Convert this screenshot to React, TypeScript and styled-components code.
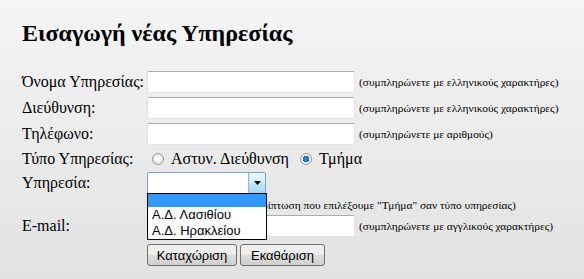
import React, { useState } from "react";
import styled, { createGlobalStyle } from "styled-components";

const GlobalStyle = createGlobalStyle`
  html, body {
    margin: 0;
    padding: 0;
  }
  body {
    font-family: "Liberation Serif", "Times New Roman", serif;
    color: #000;
    background: linear-gradient(180deg, #f5f5f5 0%, #e2e2e2 100%);
    min-height: 279px;
  }
`;

const Page = styled.div`
  width: 584px;
  height: 279px;
  box-sizing: border-box;
  padding: 19px 0 0 22px;
  background: linear-gradient(180deg, #f5f5f5 0%, #e2e2e2 100%);
  overflow: hidden;
`;

const Title = styled.h1`
  margin: 0 0 22px 0;
  font-size: 24px;
  line-height: 28px;
  font-weight: bold;
`;

const Form = styled.div`
  display: grid;
  grid-template-columns: 125px 212px 1fr;
  grid-template-rows: 26px 26px 26px 24px 24px 18px 26px 32px;
  align-items: center;
`;

const Label = styled.label`
  font-size: 16px;
  line-height: 18px;
  grid-column: 1;
`;

const TextInput = styled.input`
  box-sizing: border-box;
  width: 208px;
  height: 22px;
  margin: 0;
  border: 1px solid #e2e3ea;
  border-top-color: #abadb3;
  border-left-color: #dbdfe6;
  border-radius: 2px;
  background: #fff;
  font: 13px "Liberation Sans", Arial, sans-serif;
`;

const Hint = styled.span<{ $indent?: number }>`
  font-size: 11.4px;
  line-height: 14px;
  white-space: nowrap;
  padding-left: ${(p) => p.$indent ?? 0}px;
`;

const WideCell = styled.div<{ $shift?: number }>`
  grid-column: 2 / span 2;
  display: flex;
  align-items: center;
  padding-top: ${(p) => p.$shift ?? 0}px;
`;

const Radio = styled.span<{ $checked?: boolean }>`
  box-sizing: border-box;
  width: 12px;
  height: 12px;
  border-radius: 50%;
  border: 1px solid #9a9a9a;
  background: ${(p) =>
    p.$checked
      ? "radial-gradient(circle, #2a7fd0 0 2.5px, #0d4f8f 3px, #f2f2f2 3.5px, #d8d8d8 100%)"
      : "radial-gradient(circle, #ffffff 0 2px, #e8e8e8 4px, #cfcfcf 100%)"};
  margin: 0 7px 0 5px;
`;

const RadioText = styled.span`
  font-size: 16px;
  line-height: 18px;
  margin-right: 6px;
`;

const SelectWrap = styled.div`
  position: relative;
  width: 119px;
  height: 22px;
`;

const SelectBox = styled.div`
  box-sizing: border-box;
  width: 119px;
  height: 22px;
  border: 1px solid #7da2ce;
  border-radius: 2px;
  background: #fff;
  display: flex;
  justify-content: flex-end;
`;

const SelectArrow = styled.div`
  box-sizing: border-box;
  width: 17px;
  height: 20px;
  border-left: 1px solid #8db2e3;
  background: linear-gradient(180deg, #eaf6fd 0%, #d9f0fc 45%, #bee6fd 50%, #a7d9f5 100%);
  display: flex;
  align-items: center;
  justify-content: center;
`;

const DropList = styled.div`
  position: absolute;
  top: 21px;
  left: 0;
  width: 120px;
  box-sizing: border-box;
  border: 1px solid #000;
  background: #fff;
  z-index: 2;
`;

const Option = styled.div<{ $active?: boolean }>`
  height: ${(p) => (p.$active ? 13 : 16)}px;
  padding-left: 4px;
  font: 13px/16px "Liberation Sans", Arial, sans-serif;
  background: ${(p) => (p.$active ? "#3399ff" : "#fff")};
  white-space: nowrap;
`;

const Buttons = styled.div`
  grid-column: 2 / span 2;
  display: flex;
  gap: 3px;
`;

const Button = styled.button<{ $w: number }>`
  box-sizing: border-box;
  width: ${(p) => p.$w}px;
  height: 22px;
  padding: 0;
  border: 1px solid #707070;
  border-radius: 3px;
  background: linear-gradient(180deg, #f2f2f2 0%, #ebebeb 48%, #dddddd 52%, #cfcfcf 100%);
  font: 13px "Liberation Sans", Arial, sans-serif;
  color: #000;
`;

export default function App() {
  const [type, setType] = useState("tmima");
  const options = ["", "Α.Δ. Λασιθίου", "Α.Δ. Ηρακλείου"];

  return (
    <Page>
      <GlobalStyle />
      <Title>Εισαγωγή νέας Υπηρεσίας</Title>
      <Form>
        <Label>Όνομα Υπηρεσίας:</Label>
        <TextInput />
        <Hint>(συμπληρώνετε με ελληνικούς χαρακτήρες)</Hint>

        <Label>Διεύθυνση:</Label>
        <TextInput />
        <Hint>(συμπληρώνετε με ελληνικούς χαρακτήρες)</Hint>

        <Label>Τηλέφωνο:</Label>
        <TextInput />
        <Hint>(συμπληρώνετε με αριθμούς)</Hint>

        <Label>Τύπο Υπηρεσίας:</Label>
        <WideCell>
          <Radio $checked={type === "astyn"} onClick={() => setType("astyn")} />
          <RadioText>Αστυν. Διεύθυνση</RadioText>
          <Radio $checked={type === "tmima"} onClick={() => setType("tmima")} />
          <RadioText>Τμήμα</RadioText>
        </WideCell>

        <Label>Υπηρεσία:</Label>
        <SelectWrap>
          <SelectBox>
            <SelectArrow>
              <svg width="7" height="4" viewBox="0 0 7 4">
                <path d="M0 0h7L3.5 4z" fill="#000" />
              </svg>
            </SelectArrow>
          </SelectBox>
          <DropList>
            {options.map((o, i) => (
              <Option key={i} $active={i === 0}>
                {o}
              </Option>
            ))}
          </DropList>
        </SelectWrap>
        <span />

        <span />
        <WideCell $shift={2}>
          <Hint $indent={76}>(στην περίπτωση που επιλέξουμε "Τμήμα" σαν τύπο υπηρεσίας)</Hint>
        </WideCell>

        <Label>E-mail:</Label>
        <TextInput />
        <Hint>(συμπληρώνετε με αγγλικούς χαρακτήρες)</Hint>

        <span />
        <Buttons>
          <Button $w={90}>Καταχώριση</Button>
          <Button $w={85}>Εκαθάριση</Button>
        </Buttons>
      </Form>
    </Page>
  );
}
